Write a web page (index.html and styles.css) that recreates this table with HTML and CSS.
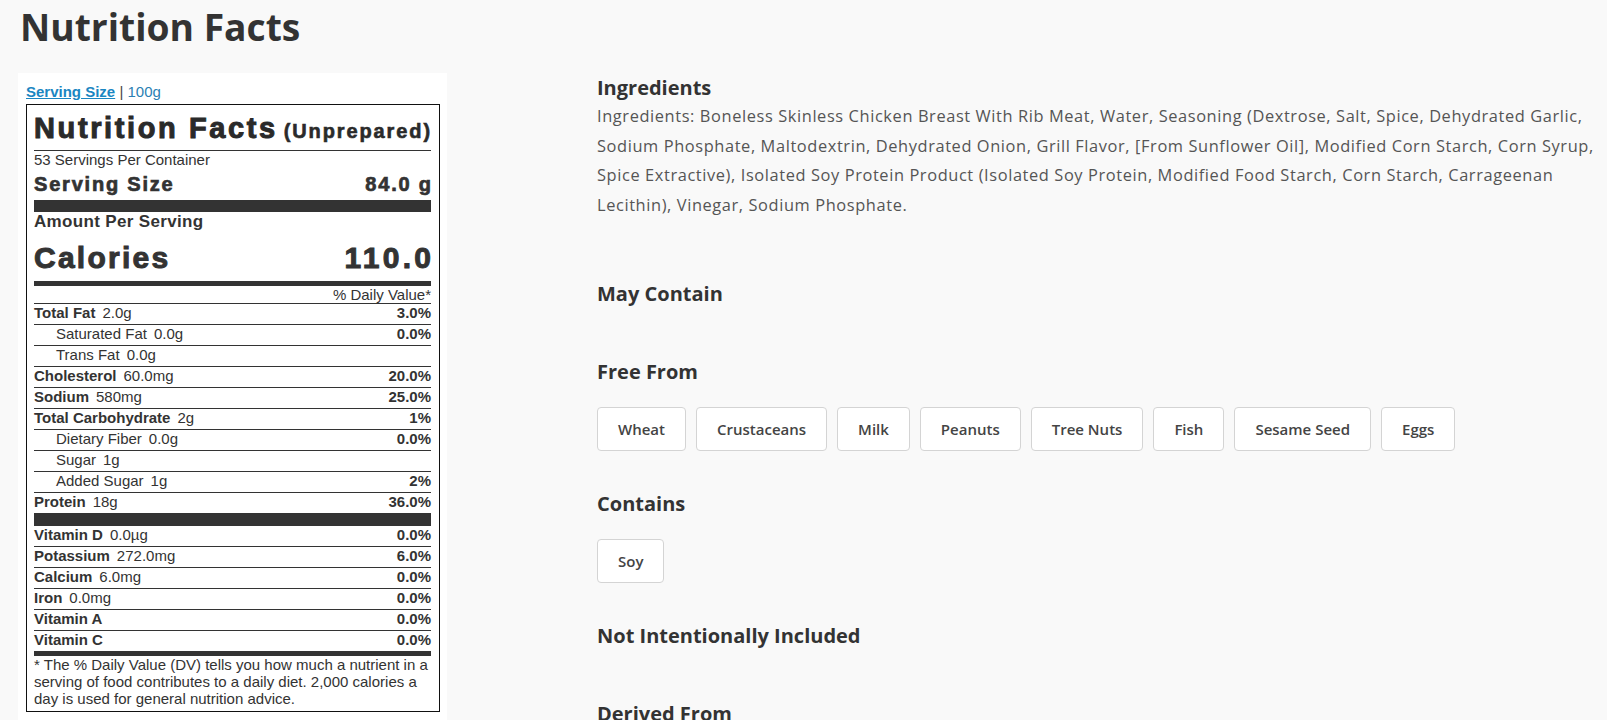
FILE: index.html
```html
<!DOCTYPE html>
<html lang="en">
<head>
<meta charset="utf-8">
<title>Nutrition Facts</title>
<link rel="stylesheet" href="styles.css">
</head>
<body>
<div class="page">
  <h1 class="page-title">Nutrition Facts</h1>
  <div class="columns">
    <div class="card">
      <div class="serving-switch"><a href="#" class="serving-link">Serving Size</a> <span class="sep">|</span> <span class="serving-alt">100g</span></div>
      <div class="label">
        <div class="label-head"><span class="label-title heavy">Nutrition Facts</span><span class="label-sub heavy">(Unprepared)</span></div>
        <div class="servings">53 Servings Per Container</div>
        <div class="serving-size heavy"><span>Serving Size</span><span class="tail">84.0 g</span></div>
        <div class="bar bar-thick"></div>
        <div class="amount">Amount Per Serving</div>
        <div class="calories heavy"><span>Calories</span><span class="tail">110.0</span></div>
        <div class="bar bar-mid"></div>
        <div class="dv-head">% Daily Value*</div>
        <div class="row"><span><b>Total Fat</b><span class="amt">2.0g</span></span><b>3.0%</b></div>
        <div class="row sub"><span>Saturated Fat<span class="amt">0.0g</span></span><b>0.0%</b></div>
        <div class="row sub"><span>Trans Fat<span class="amt">0.0g</span></span></div>
        <div class="row"><span><b>Cholesterol</b><span class="amt">60.0mg</span></span><b>20.0%</b></div>
        <div class="row"><span><b>Sodium</b><span class="amt">580mg</span></span><b>25.0%</b></div>
        <div class="row"><span><b>Total Carbohydrate</b><span class="amt">2g</span></span><b>1%</b></div>
        <div class="row sub"><span>Dietary Fiber<span class="amt">0.0g</span></span><b>0.0%</b></div>
        <div class="row sub"><span>Sugar<span class="amt">1g</span></span></div>
        <div class="row sub"><span>Added Sugar<span class="amt">1g</span></span><b>2%</b></div>
        <div class="row row-last"><span><b>Protein</b><span class="amt">18g</span></span><b>36.0%</b></div>
        <div class="bar bar-thick2"></div>
        <div class="row"><span><b>Vitamin D</b><span class="amt">0.0µg</span></span><b>0.0%</b></div>
        <div class="row"><span><b>Potassium</b><span class="amt">272.0mg</span></span><b>6.0%</b></div>
        <div class="row"><span><b>Calcium</b><span class="amt">6.0mg</span></span><b>0.0%</b></div>
        <div class="row"><span><b>Iron</b><span class="amt">0.0mg</span></span><b>0.0%</b></div>
        <div class="row"><span><b>Vitamin A</b></span><b>0.0%</b></div>
        <div class="row row-last"><span><b>Vitamin C</b></span><b>0.0%</b></div>
        <div class="bar bar-mid"></div>
        <p class="footnote">* The % Daily Value (DV) tells you how much a nutrient in a serving of food contributes to a daily diet. 2,000 calories a day is used for general nutrition advice.</p>
      </div>
    </div>
    <div class="details">
      <section class="sec sec-ingredients">
        <h2 class="sec-title">Ingredients</h2>
        <p class="ingredients">Ingredients: Boneless Skinless Chicken Breast With Rib Meat, Water, Seasoning (Dextrose, Salt, Spice, Dehydrated Garlic, Sodium Phosphate, Maltodextrin, Dehydrated Onion, Grill Flavor, [From Sunflower Oil], Modified Corn Starch, Corn Syrup, Spice Extractive), Isolated Soy Protein Product (Isolated Soy Protein, Modified Food Starch, Corn Starch, Carrageenan Lecithin), Vinegar, Sodium Phosphate.</p>
      </section>
      <section class="sec">
        <h2 class="sec-title">May Contain</h2>
        <div class="chips"></div>
      </section>
      <section class="sec">
        <h2 class="sec-title">Free From</h2>
        <div class="chips">
          <span class="chip">Wheat</span>
          <span class="chip">Crustaceans</span>
          <span class="chip">Milk</span>
          <span class="chip">Peanuts</span>
          <span class="chip">Tree Nuts</span>
          <span class="chip">Fish</span>
          <span class="chip">Sesame Seed</span>
          <span class="chip">Eggs</span>
        </div>
      </section>
      <section class="sec">
        <h2 class="sec-title">Contains</h2>
        <div class="chips">
          <span class="chip">Soy</span>
        </div>
      </section>
      <section class="sec">
        <h2 class="sec-title">Not Intentionally Included</h2>
        <div class="chips"></div>
      </section>
      <section class="sec">
        <h2 class="sec-title">Derived From</h2>
        <div class="chips"></div>
      </section>
    </div>
  </div>
</div>
</body>
</html>
```

FILE: styles.css
```css
* { box-sizing: border-box; }

html, body {
  margin: 0;
  padding: 0;
  background: #f9f9f9;
}

body {
  font-family: "Open Sans", "Liberation Sans", Arial, sans-serif;
  color: #333;
}

.page {
  padding: 0 8px 0 18px;
}

.page-title {
  margin: 0 0 0 2px;
  font-size: 37.2px;
  line-height: 54px;
  font-weight: 700;
  color: #333;
}

.columns {
  display: flex;
  align-items: flex-start;
  margin-top: 19px;
}

/* ---------- Left card with the label ---------- */
.card {
  width: 429px;
  flex: none;
  background: #fff;
  padding: 10px 7px 12px 8px;
  font-family: "Liberation Sans", Arial, sans-serif;
}

.serving-switch {
  font-size: 15px;
  line-height: 17px;
  margin-bottom: 4px;
  color: #444;
}

.serving-link {
  color: #1a86c2;
  font-weight: 700;
  text-decoration: underline;
}

.serving-alt {
  color: #2b7fb3;
}

.label {
  width: 414px;
  border: 1px solid #111;
  padding: 6px 8px 4px 7px;
  color: #333;
  font-size: 15px;
}

.heavy {
  font-weight: 700;
  -webkit-text-stroke: 0.6px currentColor;
  letter-spacing: 0.08em;
}

.tail {
  margin-right: -0.08em;
}

.label-head {
  display: flex;
  justify-content: space-between;
  align-items: baseline;
  height: 40px;
  line-height: 34px;
  padding-bottom: 5px;
  border-bottom: 1px solid #333;
  color: #2a2a2a;
}

.label-title {
  font-size: 29px;
  line-height: 34px;
  letter-spacing: 0.09em;
  -webkit-text-stroke: 1px currentColor;
}

.label-sub {
  font-size: 20px;
  line-height: 24px;
  letter-spacing: 0.095em;
  margin-right: -1px;
}

.servings {
  line-height: 17px;
}

.serving-size {
  display: flex;
  justify-content: space-between;
  font-size: 20px;
  line-height: 24px;
  margin-top: 4px;
  letter-spacing: 0.09em;
  -webkit-text-stroke: 0.7px currentColor;
}

.serving-size .tail {
  margin-right: -0.09em;
}

.bar {
  background: #333;
}

.bar-thick {
  height: 12px;
  margin-top: 4px;
}

.bar-thick2 {
  height: 13px;
}

.bar-mid {
  height: 5px;
}

.amount {
  font-size: 17px;
  font-weight: 700;
  line-height: 20px;
  letter-spacing: 0.02em;
}

.calories {
  display: flex;
  justify-content: space-between;
  font-size: 30px;
  line-height: 36px;
  padding: 8px 0 5px;
  letter-spacing: 0.075em;
  -webkit-text-stroke: 1px currentColor;
}

.calories .tail {
  letter-spacing: 0.11em;
  margin-right: -0.11em;
}

.dv-head {
  text-align: right;
  line-height: 17px;
  border-bottom: 1px solid #333;
}

.row {
  display: flex;
  justify-content: space-between;
  line-height: 18px;
  padding-bottom: 2px;
  border-bottom: 1px solid #333;
}

.row.sub {
  padding-left: 22px;
}

.row-last {
  border-bottom: none;
}

.row b {
  font-weight: 700;
}

.amt {
  margin-left: 7px;
}

.footnote {
  margin: 0;
  line-height: 17px;
}

/* ---------- Right details column ---------- */
.details {
  flex: 1;
  min-width: 0;
  margin-left: 150px;
  padding-top: 1px;
}

.sec {
  margin: 0;
}

.sec-title {
  margin: 0 0 21px;
  font-size: 20px;
  line-height: 28px;
  font-weight: 700;
  color: #333;
}

.sec-ingredients .sec-title {
  margin-bottom: 0;
}

.ingredients {
  margin: -1px 0 61px;
  font-size: 16.4px;
  line-height: 29.5px;
  letter-spacing: 0.6px;
  color: #555;
}

.chips {
  display: flex;
  flex-wrap: wrap;
  column-gap: 10px;
  margin-bottom: 29px;
}

.chip {
  display: inline-block;
  background: #fff;
  border: 1px solid #d4d4d4;
  border-radius: 4px;
  padding: 10px 20px;
  margin-bottom: 10px;
  font-size: 15px;
  line-height: 22px;
  font-weight: 600;
  color: #444;
}
```
